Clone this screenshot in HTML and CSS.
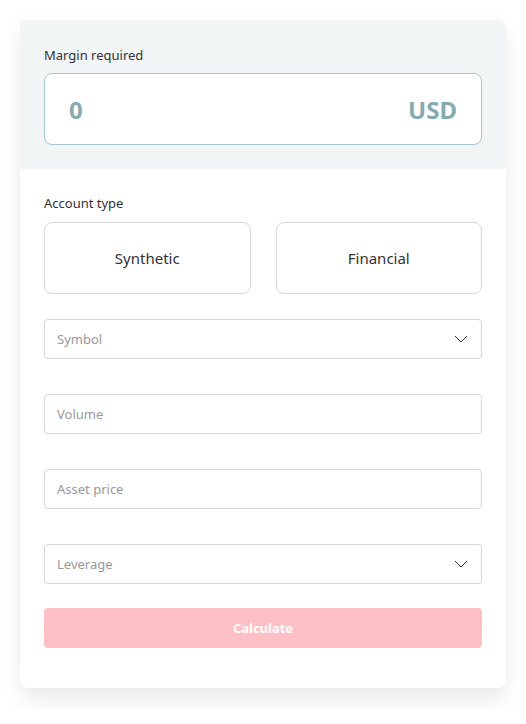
FILE: index.html
```html
<!DOCTYPE html>
<html>
<head>
<meta charset="utf-8">
<link rel="stylesheet" href="styles.css">
</head>
<body>
<div class="card">
  <div class="result">
    <div class="label">Margin required</div>
    <div class="result-box">
      <span class="amount">0</span>
      <span class="currency">USD</span>
    </div>
  </div>
  <div class="form">
    <div class="label">Account type</div>
    <div class="types">
      <div class="type">Synthetic</div>
      <div class="type">Financial</div>
    </div>
    <div class="field select"><span>Symbol</span>
      <svg class="chev" width="14" height="8" viewBox="0 0 14 8"><path d="M1 1l6 6 6-6" fill="none" stroke="#333" stroke-width="1"/></svg>
    </div>
    <div class="field"><span>Volume</span></div>
    <div class="field"><span>Asset price</span></div>
    <div class="field select"><span>Leverage</span>
      <svg class="chev" width="14" height="8" viewBox="0 0 14 8"><path d="M1 1l6 6 6-6" fill="none" stroke="#333" stroke-width="1"/></svg>
    </div>
    <div class="calc">Calculate</div>
  </div>
</div>
</body>
</html>
```
FILE: styles.css
```css
* { box-sizing: border-box; }
body {
  margin: 0;
  padding: 20px;
  background: #fff;
  font-family: "Noto Sans", "Open Sans", sans-serif;
}
.card {
  width: 486px;
  border-radius: 8px;
  overflow: hidden;
  background: #fff;
  box-shadow: 0 16px 20px rgba(0,0,0,0.06), 0 0 20px rgba(0,0,0,0.04);
}
.result {
  background: #f2f5f5;
  padding: 25px 24px 24px;
  height: 149px;
}
.label {
  font-size: 13px;
  color: #333;
  line-height: 20px;
  height: 20px;
  margin-bottom: 8px;
}
.result-box {
  height: 72px;
  border: 1px solid #a9c6c9;
  border-radius: 8px;
  background: #fff;
  display: flex;
  align-items: center;
  justify-content: space-between;
  padding: 0 24px;
  color: #85abb0;
  font-weight: 700;
  font-size: 24px;
}
.form {
  padding: 24px 24px 40px;
}
.form .label { margin-bottom: 9px; }
.types {
  display: flex;
  gap: 25px;
  margin-bottom: 25px;
}
.type {
  flex: 1;
  height: 72px;
  border: 1px solid #d6d6d6;
  border-radius: 8px;
  display: flex;
  align-items: center;
  justify-content: center;
  font-size: 15px;
  color: #333;
}
.field {
  height: 40px;
  border: 1px solid #d6d6d6;
  border-radius: 4px;
  display: flex;
  align-items: center;
  justify-content: space-between;
  padding: 0 12px;
  font-size: 13px;
  color: #999;
  margin-bottom: 35px;
}
.chev { margin-right: 1px; }
.calc {
  height: 40px;
  border-radius: 4px;
  background: #ffc0c5;
  color: #fff;
  font-weight: 700;
  font-size: 13px;
  display: flex;
  align-items: center;
  justify-content: center;
  margin-top: -11px;
}
```
